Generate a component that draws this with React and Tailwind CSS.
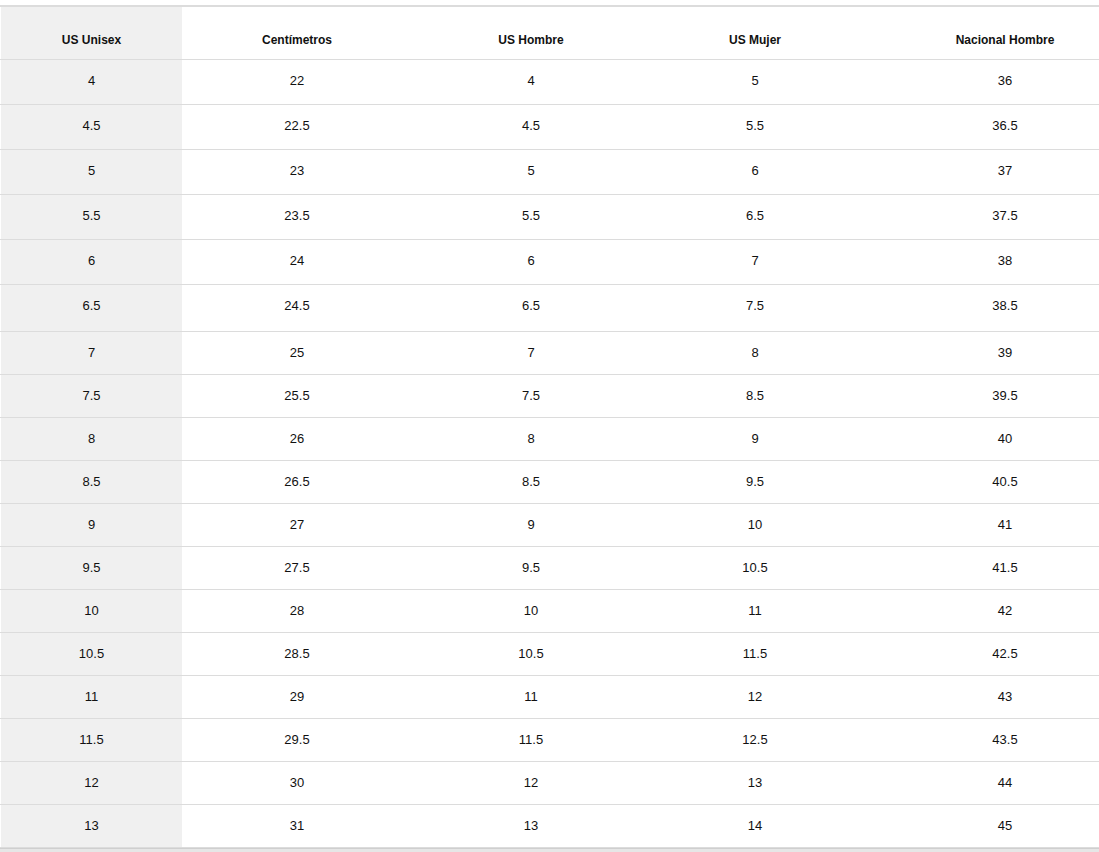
const rows = [
  ["4", "22", "4", "5", "36", 44],
  ["4.5", "22.5", "4.5", "5.5", "36.5", 44],
  ["5", "23", "5", "6", "37", 44],
  ["5.5", "23.5", "5.5", "6.5", "37.5", 44],
  ["6", "24", "6", "7", "38", 44],
  ["6.5", "24.5", "6.5", "7.5", "38.5", 46],
  ["7", "25", "7", "8", "39", 42],
  ["7.5", "25.5", "7.5", "8.5", "39.5", 42],
  ["8", "26", "8", "9", "40", 42],
  ["8.5", "26.5", "8.5", "9.5", "40.5", 42],
  ["9", "27", "9", "10", "41", 42],
  ["9.5", "27.5", "9.5", "10.5", "41.5", 42],
  ["10", "28", "10", "11", "42", 42],
  ["10.5", "28.5", "10.5", "11.5", "42.5", 42],
  ["11", "29", "11", "12", "43", 42],
  ["11.5", "29.5", "11.5", "12.5", "43.5", 42],
  ["12", "30", "12", "13", "44", 42],
  ["13", "31", "13", "14", "45", 42],
];

const headers = ["US Unisex", "Centímetros", "US Hombre", "US Mujer", "Nacional Hombre"];

// padding bas selon la hauteur de ligne
const bodyPad = {
  42: "items-center",
  44: "items-center pb-[2px]",
  46: "items-center pb-[4px]",
};

function Row({ cells, height, header }) {
  const align = header ? "items-end pb-[10px]" : bodyPad[height - 1];
  return (
    <div className="flex border-b border-[#dcdcdc]" style={{ height }}>
      <div className="w-px bg-white" />
      <div className={`w-[181px] bg-[#f0f0f0] flex justify-center ${align}`}>
        {cells[0]}
      </div>
      {[
        ["w-[230px]", cells[1]],
        ["w-[238px]", cells[2]],
        ["w-[210px]", cells[3]],
        ["w-[290px]", cells[4]],
      ].map(([w, c], i) => (
        <div key={i} className={`${w} flex justify-center ${align}`}>
          {c}
        </div>
      ))}
    </div>
  );
}

export default function App() {
  return (
    <div
      className="w-[1099px] h-[852px] overflow-hidden bg-white pt-[5px] flex flex-col text-[#111]"
      style={{ fontFamily: '"Liberation Sans", Arial, sans-serif' }}
    >
      <div className="w-[1150px] border-t-2 border-[#dcdcdc]">
        {/* En-tête */}
        <div className="text-[12px] font-bold">
          <Row cells={headers} height={53} header />
        </div>
        {/* Tailles */}
        <div className="text-[13px]">
          {rows.map((r) => (
            <Row key={r[0]} cells={r} height={r[5] + 1} />
          ))}
        </div>
      </div>
      {/* Barre de défilement */}
      <div className="flex-1 bg-[#e6e6e6] border-t border-[#cfcfcf]" />
    </div>
  );
}
